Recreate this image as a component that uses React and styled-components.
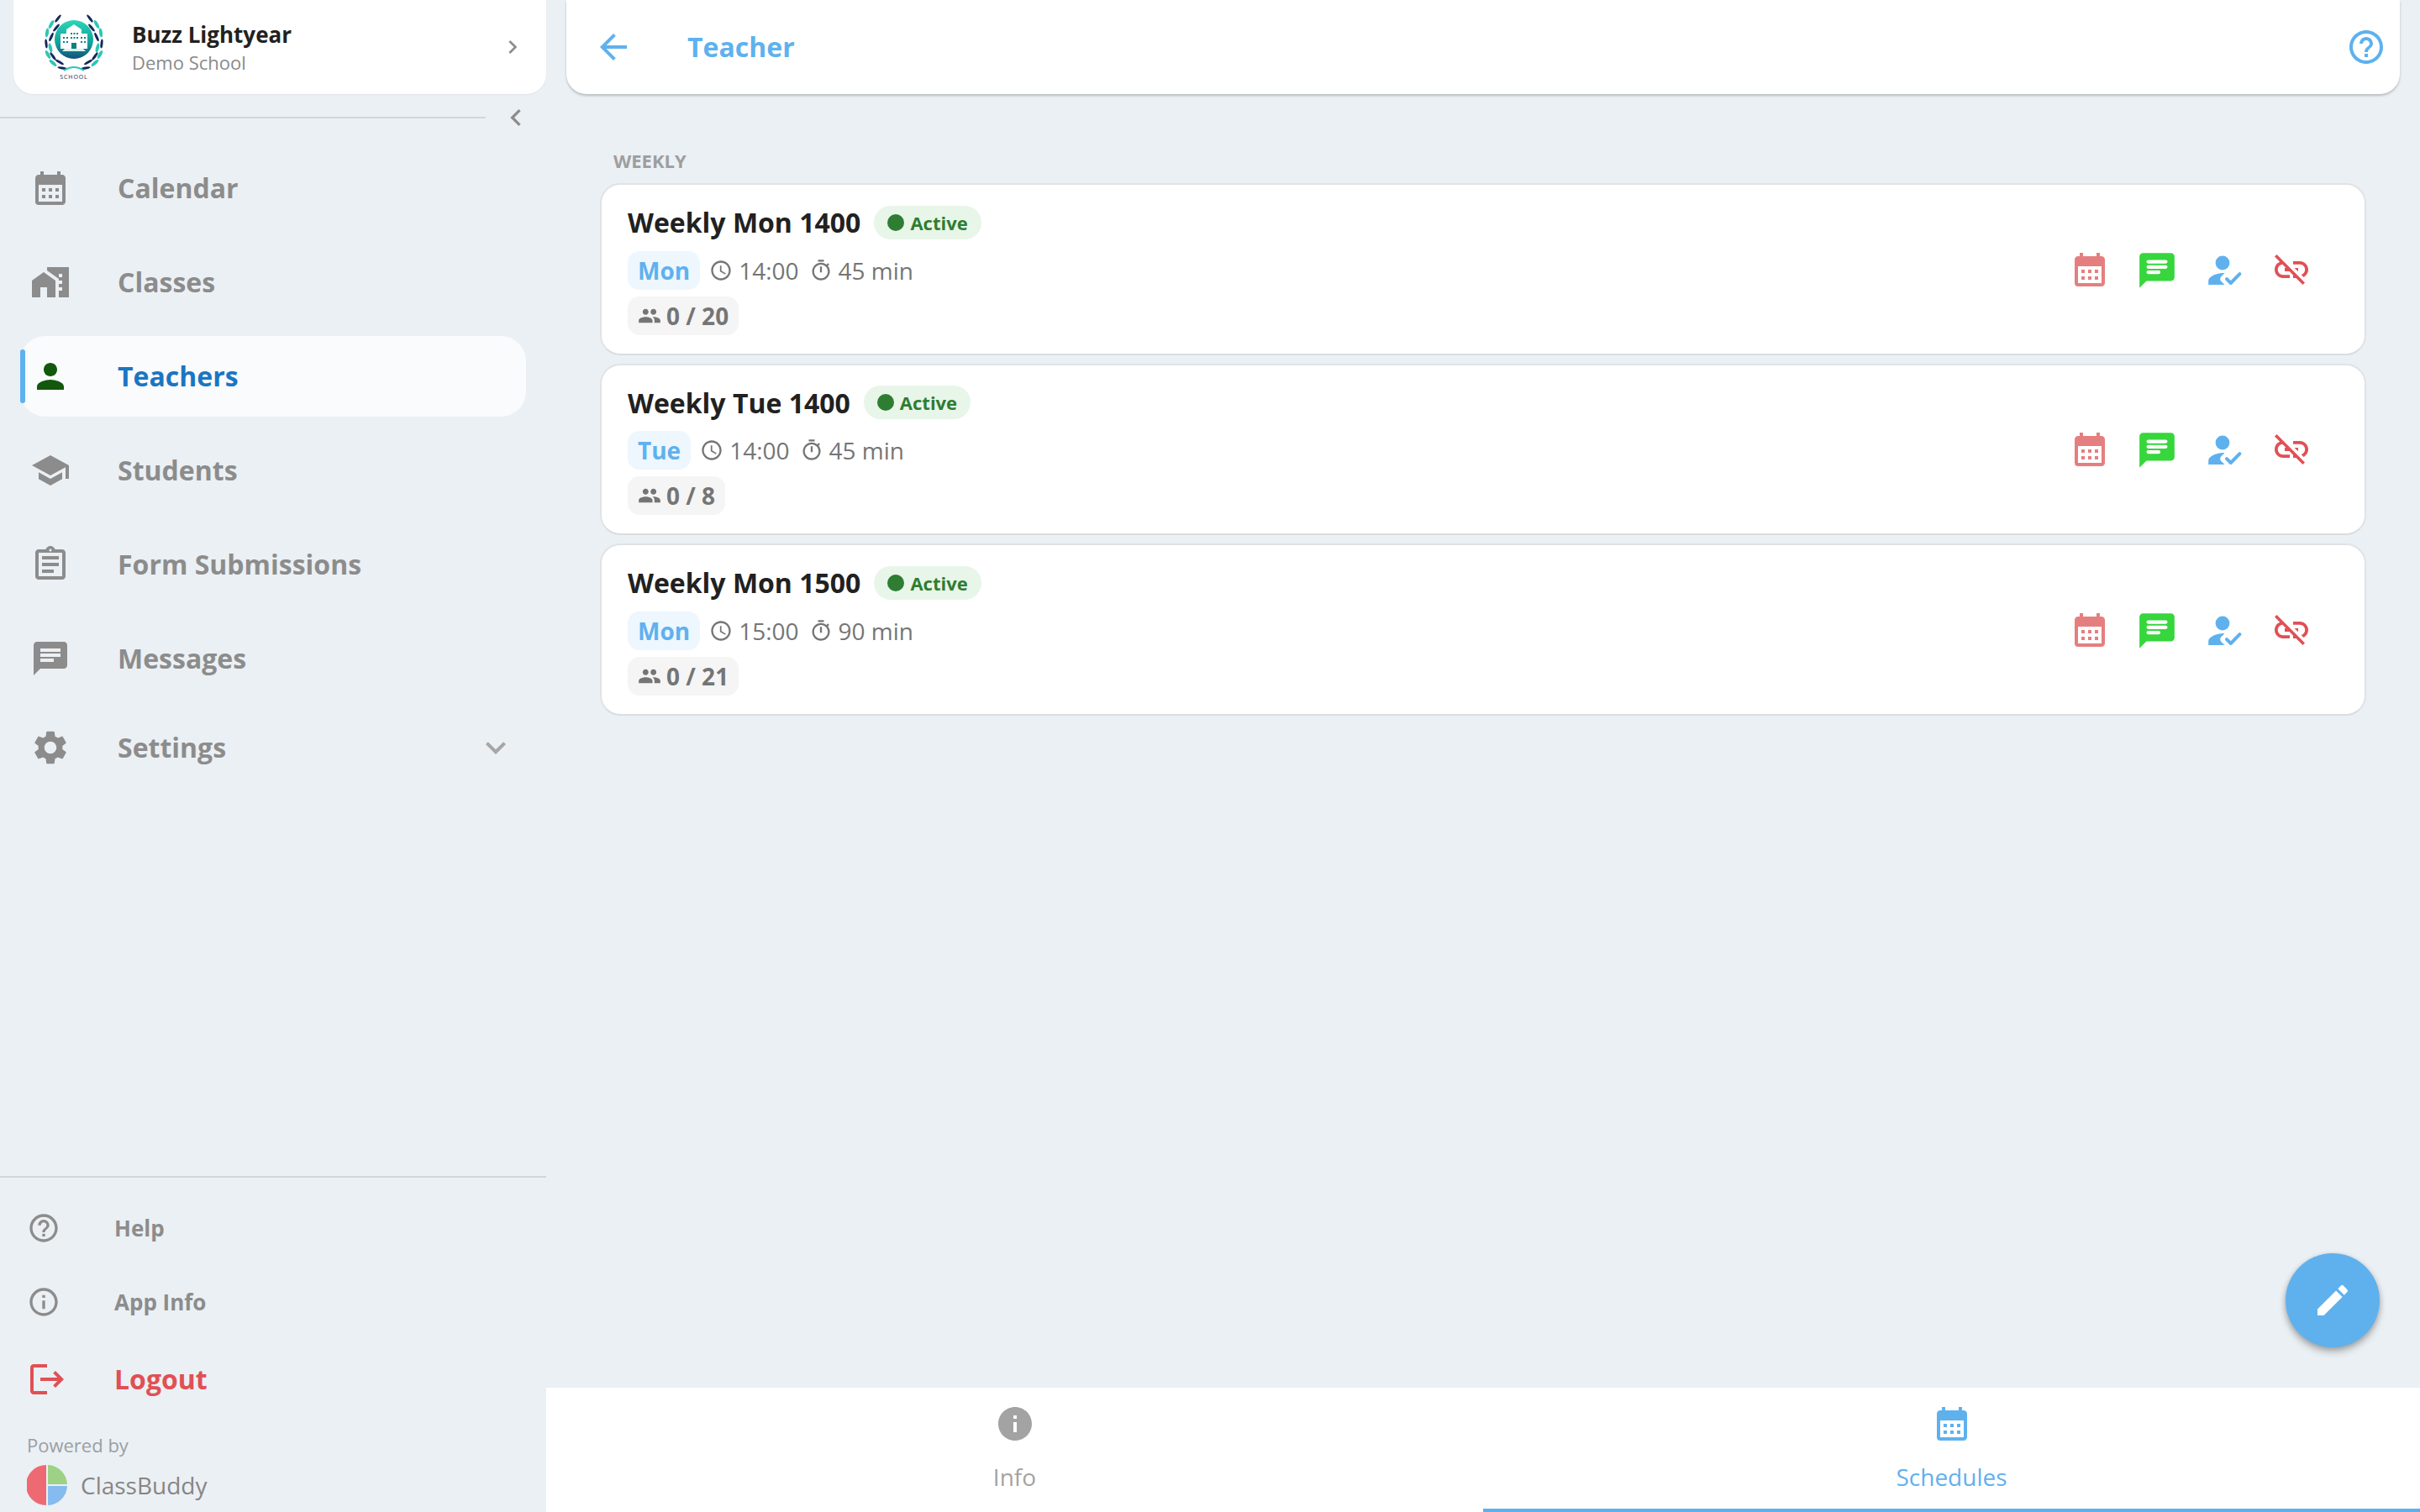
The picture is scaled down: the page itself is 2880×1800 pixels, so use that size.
import React from "react";
import styled, { createGlobalStyle } from "styled-components";
import {
  MdCalendarMonth,
  MdMapsHomeWork,
  MdPerson,
  MdSchool,
  MdOutlineAssignment,
  MdChat,
  MdSettings,
  MdExpandMore,
  MdChevronRight,
  MdChevronLeft,
  MdHelpOutline,
  MdInfoOutline,
  MdInfo,
  MdLogout,
  MdArrowBack,
  MdAccessTime,
  MdOutlineTimer,
  MdPeople,
  MdLinkOff,
  MdEdit,
} from "react-icons/md";

const BLUE = "#5fb1ee";
const GREY = "#8c8c8c";

const GlobalStyle = createGlobalStyle`
  html, body {
    margin: 0;
    padding: 0;
    background: #ebf0f4;
    font-family: "Open Sans", "Noto Sans", sans-serif;
  }
  * { box-sizing: border-box; }
`;

const Page = styled.div`
  display: flex;
  width: 2880px;
  height: 1800px;
  overflow: hidden;
  background: #ebf0f4;
`;

const Sidebar = styled.aside`
  width: 650px;
  flex-shrink: 0;
  display: flex;
  flex-direction: column;
`;

const ProfileCard = styled.div`
  height: 112px;
  margin-left: 16px;
  padding: 0 24px 0 36px;
  background: #fff;
  border-radius: 0 0 24px 24px;
  display: flex;
  align-items: center;
  box-shadow: 0 1px 2px rgba(0, 0, 0, 0.05);
`;

const ProfileText = styled.div`
  flex: 1;
  margin-left: 33px;
  display: flex;
  flex-direction: column;
  gap: 2px;
`;

const ProfileName = styled.div`
  font-size: 26px;
  font-weight: 700;
  line-height: 34px;
  color: #212121;
`;

const ProfileSchool = styled.div`
  font-size: 22px;
  line-height: 28px;
  color: #8a8a8a;
`;

const CollapseRow = styled.div`
  height: 56px;
  display: flex;
  align-items: center;
`;

const CollapseLine = styled.div`
  width: 578px;
  height: 2px;
  background: #d2d6da;
`;

const CollapseIcon = styled.div`
  margin-left: 16px;
  display: flex;
  color: ${GREY};
`;

const NavList = styled.nav`
  display: flex;
  flex-direction: column;
`;

const NavItem = styled.div`
  position: relative;
  height: 96px;
  margin: ${(p) => (p.$tight ? "2px 24px" : "8px 24px")};
  padding-left: 12px;
  border-radius: 30px;
  background: ${(p) => (p.$active ? "#f9fbfd" : "transparent")};
  display: flex;
  align-items: center;
  color: ${GREY};
`;

const ActiveBar = styled.span`
  position: absolute;
  left: 0;
  top: 16px;
  width: 6px;
  height: 64px;
  border-radius: 3px;
  background: ${BLUE};
`;

const NavIcon = styled.span`
  display: flex;
  color: ${(p) => (p.$active ? "#14570f" : GREY)};
`;

const NavLabel = styled.span`
  flex: 1;
  margin-left: 56px;
  padding-bottom: 2px;
  font-size: 32px;
  font-weight: 700;
  color: ${(p) => (p.$active ? "#1a76c2" : GREY)};
`;

const NavArrow = styled.span`
  display: flex;
  margin-right: 12px;
  color: #a6a6a6;
`;

const Spacer = styled.div`
  flex: 1;
`;

const FooterLine = styled.div`
  height: 2px;
  background: #d2d6da;
`;

const FooterList = styled.div`
  padding-top: 16px;
  display: flex;
  flex-direction: column;
`;

const FooterItem = styled.div`
  height: ${(p) => (p.$logout ? "96px" : "88px")};
  padding-left: 32px;
  display: flex;
  align-items: center;
  color: ${(p) => (p.$logout ? "#e05055" : GREY)};
`;

const FooterIcon = styled.span`
  width: 104px;
  display: flex;
`;

const FooterLabel = styled.span`
  padding-bottom: ${(p) => (p.$logout ? "2px" : "0")};
  font-size: ${(p) => (p.$logout ? "32px" : "26px")};
  font-weight: 700;
`;

const Powered = styled.div`
  padding: 17px 0 8px 32px;
`;

const PoweredText = styled.div`
  font-size: 22px;
  line-height: 26px;
  color: #9a9fa3;
`;

const Brand = styled.div`
  margin-top: 11px;
  display: flex;
  align-items: center;
  gap: 16px;
  font-size: 28px;
  color: #868686;
`;

const Main = styled.main`
  position: relative;
  flex: 1;
  min-width: 0;
  display: flex;
  flex-direction: column;
`;

const AppBar = styled.header`
  height: 112px;
  margin: 0 24px;
  padding: 0 16px 0 32px;
  background: #fff;
  border-radius: 0 0 24px 24px;
  box-shadow: 0 2px 3px rgba(0, 0, 0, 0.22);
  display: flex;
  align-items: center;
  color: ${BLUE};
`;

const AppTitle = styled.h1`
  flex: 1;
  margin: 0 0 2px 64px;
  font-size: 32px;
  font-weight: 700;
`;

const Content = styled.section`
  flex: 1;
  padding: 64px 64px 0;
`;

const SectionLabel = styled.div`
  padding-left: 16px;
  margin-bottom: 12px;
  font-size: 22px;
  line-height: 30px;
  font-weight: 700;
  color: #9e9e9e;
`;

const CardList = styled.div`
  display: flex;
  flex-direction: column;
  gap: 10px;
`;

const Card = styled.article`
  height: 204.5px;
  padding: 25px 47px 22px 31px;
  background: #fff;
  border: 2px solid #e0e3e6;
  border-bottom-color: #dadde0;
  border-radius: 24px;
  display: flex;
  align-items: center;
  justify-content: space-between;
`;

const CardBody = styled.div`
  display: flex;
  flex-direction: column;
  align-items: flex-start;
`;

const TitleRow = styled.div`
  height: 40px;
  display: flex;
  align-items: center;
  gap: 16px;
`;

const CardTitle = styled.h3`
  margin: 0;
  font-size: 32px;
  font-weight: 700;
  color: #212121;
`;

const StatusBadge = styled.span`
  height: 40px;
  padding: 0 16px;
  border-radius: 20px;
  background: #e8f5e9;
  display: flex;
  align-items: center;
  gap: 7px;
  font-size: 22px;
  font-weight: 700;
  color: #2e7d32;
`;

const StatusDot = styled.span`
  width: 20px;
  height: 20px;
  border-radius: 50%;
  background: #2e7d32;
`;

const InfoRow = styled.div`
  margin-top: 14px;
  height: 46px;
  display: flex;
  align-items: center;
`;

const DayChip = styled.span`
  height: 46px;
  padding: 0 12px;
  border-radius: 14px;
  background: #eef6fe;
  display: flex;
  align-items: center;
  font-size: 28px;
  font-weight: 700;
  color: ${BLUE};
`;

const Meta = styled.span`
  margin-left: ${(p) => (p.$first ? "11px" : "12px")};
  display: flex;
  align-items: center;
  gap: 7px;
  font-size: 28px;
  color: #757575;
`;

const CapacityChip = styled.span`
  margin-top: 8px;
  height: 46px;
  padding: 0 12px;
  border-radius: 14px;
  background: #f5f5f5;
  display: flex;
  align-items: center;
  gap: 6px;
  font-size: 28px;
  font-weight: 700;
  color: #757575;
`;

const Actions = styled.div`
  display: flex;
  align-items: flex-start;
`;

const ActionButton = styled.span`
  width: 80px;
  height: 50px;
  display: flex;
  justify-content: center;
  color: ${(p) => p.$color};
`;

const Tabs = styled.nav`
  height: 148px;
  background: #fff;
  display: flex;
`;

const Tab = styled.div`
  position: relative;
  flex: 1;
  padding-top: 19px;
  display: flex;
  flex-direction: column;
  align-items: center;
  gap: 20px;
  color: ${(p) => (p.$active ? BLUE : "#a3a3a3")};
  font-size: 28px;
`;

const TabLine = styled.span`
  position: absolute;
  left: 0;
  right: 0;
  bottom: 0;
  height: 4px;
  background: ${BLUE};
`;

const Fab = styled.button`
  position: absolute;
  right: 48px;
  bottom: 196px;
  width: 112px;
  height: 112px;
  padding: 0;
  border: 0;
  border-radius: 50%;
  background: ${BLUE};
  color: #fff;
  display: flex;
  align-items: center;
  justify-content: center;
  box-shadow: 0 6px 10px rgba(0, 0, 0, 0.2), 0 2px 6px rgba(0, 0, 0, 0.2);
`;

function Leaf({ x, y, r, fill, w }) {
  return <ellipse cx={x} cy={y} rx={w} ry="5.6" fill={fill} transform={`rotate(${r} ${x} ${y})`} />;
}

// one side of the wreath, mirrored for the other
const LEAVES = [
  [17, 6, 38, "#15275c", 1.5],
  [9, 13, 30, "#2cc7b6", 2],
  [15, 17, 40, "#15275c", 1.5],
  [4, 23, 8, "#2cc7b6", 2],
  [9, 28, 25, "#15275c", 1.5],
  [3, 36, -6, "#15275c", 1.5],
  [8, 41, -14, "#2cc7b6", 2],
  [5, 49, -30, "#2cc7b6", 2],
  [11, 51, -36, "#15275c", 1.5],
  [11, 59, -50, "#2cc7b6", 2],
  [19, 58, -60, "#15275c", 1.5],
  [22, 65, -80, "#15275c", 1.5],
];

function SchoolLogo() {
  return (
    <svg width="72" height="80" viewBox="0 0 72 80">
      <defs>
        <linearGradient id="crest" x1="0" y1="0" x2="0" y2="1">
          <stop offset="0" stopColor="#2ad6b8" />
          <stop offset="0.6" stopColor="#12a09a" />
          <stop offset="1" stopColor="#134f7c" />
        </linearGradient>
      </defs>
      {LEAVES.map(([x, y, r, fill, w]) => (
        <React.Fragment key={`${x}-${y}`}>
          <Leaf x={x} y={y} r={r} fill={fill} w={w} />
          <Leaf x={72 - x} y={y} r={-r} fill={fill} w={w} />
        </React.Fragment>
      ))}
      <path d="M24 68 Q36 60 48 68" fill="none" stroke="#2cc7b6" strokeWidth="2" />
      <circle cx="36" cy="31" r="23" fill="url(#crest)" />
      <path d="M36 13 L45 19 V24 H52 V42 H20 V24 H27 V19 Z" fill="#fff" />
      <path d="M22 45 H50 L47 42 H25 Z" fill="#d8f5ef" />
      <rect x="33" y="35" width="6" height="7" fill="#0f7f86" />
      <g fill="#0f7f86">
        <rect x="23" y="28" width="2" height="2" />
        <rect x="27" y="28" width="2" height="2" />
        <rect x="44" y="28" width="2" height="2" />
        <rect x="48" y="28" width="2" height="2" />
        <rect x="23" y="33" width="2" height="2" />
        <rect x="27" y="33" width="2" height="2" />
        <rect x="44" y="33" width="2" height="2" />
        <rect x="48" y="33" width="2" height="2" />
        <rect x="32" y="23" width="2" height="2" />
        <rect x="35.5" y="23" width="2" height="2" />
        <rect x="39" y="23" width="2" height="2" />
        <rect x="32" y="28" width="2" height="2" />
        <rect x="35.5" y="28" width="2" height="2" />
        <rect x="39" y="28" width="2" height="2" />
      </g>
      <text x="36" y="78" textAnchor="middle" fontFamily="Open Sans, sans-serif" fontSize="7" letterSpacing="0.9" fill="#1b2a5a">
        SCHOOL
      </text>
    </svg>
  );
}

function PieLogo() {
  return (
    <svg width="48" height="48" viewBox="0 0 48 48">
      <path d="M23 0 A24 24 0 0 0 23 48 Z" fill="#ee6a72" />
      <path d="M25 0 A24 24 0 0 1 48 23 H25 Z" fill="#9dd186" />
      <path d="M25 25 H48 A24 24 0 0 1 25 48 Z" fill="#85bbef" />
    </svg>
  );
}

function ChatBubble() {
  return (
    <svg width="50" height="50" viewBox="0 0 24 24">
      <path d="M20 2H4c-1.1 0-2 .9-2 2v18l4-4h14c1.1 0 2-.9 2-2V4c0-1.1-.9-2-2-2z" fill="#36d63c" />
      <rect x="6" y="6" width="12" height="2" rx="1" fill="#fff" />
      <rect x="6" y="9" width="12" height="2" rx="1" fill="#fff" />
      <rect x="6" y="12" width="8" height="2" rx="1" fill="#fff" />
    </svg>
  );
}

function PersonCheck() {
  return (
    <svg width="48" height="48" viewBox="0 0 24 24" fill="currentColor">
      <circle cx="11" cy="8" r="4.2" />
      <path d="M2.6 21v-2.4c0-2.7 5.6-4.6 8.4-4.6.4 0 .8.02 1.2.07l-2 2c-.8.8-.8 2.1 0 2.9l2.1 2.03z" />
      <path d="M13.5 17.6l2.4 2.4 5.3-5.4" fill="none" stroke="currentColor" strokeWidth="2" strokeLinecap="round" strokeLinejoin="round" />
    </svg>
  );
}

const NAV = [
  { label: "Calendar", Icon: MdCalendarMonth },
  { label: "Classes", Icon: MdMapsHomeWork },
  { label: "Teachers", Icon: MdPerson, active: true },
  { label: "Students", Icon: MdSchool },
  { label: "Form Submissions", Icon: MdOutlineAssignment },
  { label: "Messages", Icon: MdChat },
];

const SCHEDULES = [
  { title: "Weekly Mon 1400", day: "Mon", time: "14:00", length: "45 min", seats: "0 / 20" },
  { title: "Weekly Tue 1400", day: "Tue", time: "14:00", length: "45 min", seats: "0 / 8" },
  { title: "Weekly Mon 1500", day: "Mon", time: "15:00", length: "90 min", seats: "0 / 21" },
];

export default function App() {
  return (
    <Page>
      <GlobalStyle />
      <Sidebar>
        <ProfileCard>
          <SchoolLogo />
          <ProfileText>
            <ProfileName>Buzz Lightyear</ProfileName>
            <ProfileSchool>Demo School</ProfileSchool>
          </ProfileText>
          <MdChevronRight size={32} color={GREY} />
        </ProfileCard>
        <CollapseRow>
          <CollapseLine />
          <CollapseIcon>
            <MdChevronLeft size={40} />
          </CollapseIcon>
        </CollapseRow>
        <NavList>
          {NAV.map(({ label, Icon, active }) => (
            <NavItem key={label} $active={active}>
              {active && <ActiveBar />}
              <NavIcon $active={active}>
                <Icon size={48} />
              </NavIcon>
              <NavLabel $active={active}>{label}</NavLabel>
            </NavItem>
          ))}
          <NavItem $tight>
            <NavIcon>
              <MdSettings size={48} />
            </NavIcon>
            <NavLabel>Settings</NavLabel>
            <NavArrow>
              <MdExpandMore size={48} />
            </NavArrow>
          </NavItem>
        </NavList>
        <Spacer />
        <FooterLine />
        <FooterList>
          <FooterItem>
            <FooterIcon>
              <MdHelpOutline size={40} />
            </FooterIcon>
            <FooterLabel>Help</FooterLabel>
          </FooterItem>
          <FooterItem>
            <FooterIcon>
              <MdInfoOutline size={40} />
            </FooterIcon>
            <FooterLabel>App Info</FooterLabel>
          </FooterItem>
          <FooterItem $logout>
            <FooterIcon>
              <MdLogout size={48} />
            </FooterIcon>
            <FooterLabel $logout>Logout</FooterLabel>
          </FooterItem>
        </FooterList>
        <Powered>
          <PoweredText>Powered by</PoweredText>
          <Brand>
            <PieLogo />
            ClassBuddy
          </Brand>
        </Powered>
      </Sidebar>
      <Main>
        <AppBar>
          <MdArrowBack size={48} />
          <AppTitle>Teacher</AppTitle>
          <MdHelpOutline size={48} />
        </AppBar>
        <Content>
          <SectionLabel>WEEKLY</SectionLabel>
          <CardList>
            {SCHEDULES.map((s) => (
              <Card key={s.title}>
                <CardBody>
                  <TitleRow>
                    <CardTitle>{s.title}</CardTitle>
                    <StatusBadge>
                      <StatusDot />
                      Active
                    </StatusBadge>
                  </TitleRow>
                  <InfoRow>
                    <DayChip>{s.day}</DayChip>
                    <Meta $first>
                      <MdAccessTime size={28} />
                      {s.time}
                    </Meta>
                    <Meta>
                      <MdOutlineTimer size={28} />
                      {s.length}
                    </Meta>
                  </InfoRow>
                  <CapacityChip>
                    <MdPeople size={28} />
                    {s.seats}
                  </CapacityChip>
                </CardBody>
                <Actions>
                  <ActionButton $color="#e57f7f">
                    <MdCalendarMonth size={48} />
                  </ActionButton>
                  <ActionButton>
                    <ChatBubble />
                  </ActionButton>
                  <ActionButton $color={BLUE}>
                    <PersonCheck />
                  </ActionButton>
                  <ActionButton $color="#e05055">
                    <MdLinkOff size={48} />
                  </ActionButton>
                </Actions>
              </Card>
            ))}
          </CardList>
        </Content>
        <Tabs>
          <Tab>
            <MdInfo size={48} />
            Info
          </Tab>
          <Tab $active>
            <MdCalendarMonth size={48} />
            Schedules
            <TabLine />
          </Tab>
        </Tabs>
        <Fab>
          <MdEdit size={48} />
        </Fab>
      </Main>
    </Page>
  );
}
